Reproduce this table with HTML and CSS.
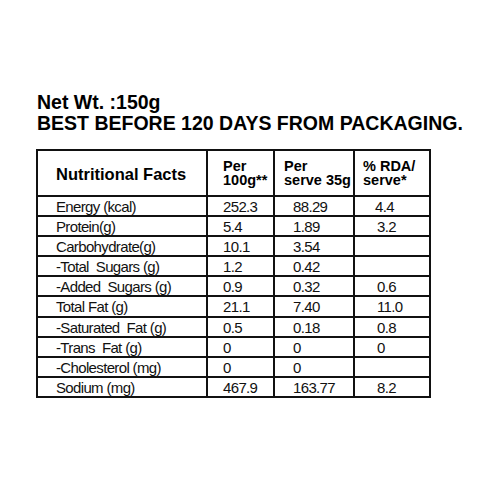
FILE: index.html
```html
<!DOCTYPE html>
<html>
    <head>
        <title>Nutrition Label</title>
        <link rel="stylesheet" href="styles.css">
    </head>

    <body>
        <div class="label">
            <div class="info">
                <p>Net Wt. :150g</p>
                <p>BEST BEFORE 120 DAYS FROM PACKAGING.</p>
            </div><!--info-->

            <table class="facts">
                <colgroup>
                    <col class="w1">
                    <col class="w2">
                    <col class="w3">
                    <col class="w4">
                </colgroup>
                <thead>
                    <tr>
                        <th class="name">Nutritional Facts</th>
                        <th class="c2">Per<br>100g**</th>
                        <th class="c3">Per<br>serve 35g</th>
                        <th class="c4">% RDA/<br>serve*</th>
                    </tr>
                </thead>
                <tbody>
                    <tr><td>Energy (kcal)</td><td class="c2">252.3</td><td class="c3">88.29</td><td class="c4 rda">4.4</td></tr>
                    <tr><td>Protein(g)</td><td class="c2">5.4</td><td class="c3">1.89</td><td class="c4">3.2</td></tr>
                    <tr><td>Carbohydrate(g)</td><td class="c2">10.1</td><td class="c3">3.54</td><td class="c4"></td></tr>
                    <tr><td>-Total&nbsp; Sugars (g)</td><td class="c2">1.2</td><td class="c3">0.42</td><td class="c4"></td></tr>
                    <tr><td>-Added&nbsp; Sugars (g)</td><td class="c2">0.9</td><td class="c3">0.32</td><td class="c4">0.6</td></tr>
                    <tr><td>Total Fat (g)</td><td class="c2">21.1</td><td class="c3">7.40</td><td class="c4">11.0</td></tr>
                    <tr><td>-Saturated&nbsp; Fat (g)</td><td class="c2">0.5</td><td class="c3">0.18</td><td class="c4">0.8</td></tr>
                    <tr><td>-Trans&nbsp; Fat (g)</td><td class="c2">0</td><td class="c3">0</td><td class="c4">0</td></tr>
                    <tr><td>-Cholesterol (mg)</td><td class="c2">0</td><td class="c3">0</td><td class="c4"></td></tr>
                    <tr><td>Sodium (mg)</td><td class="c2">467.9</td><td class="c3">163.77</td><td class="c4">8.2</td></tr>
                </tbody>
            </table>
        </div><!--label-->
    </body>
</html>
```

FILE: styles.css
```css
*{margin:0;padding:0;}

body{
    background: #fff;
    font-family: "Liberation Sans", Arial, sans-serif;
    color: #111;
}

.label{
    padding: 92px 0 0 37px;
}

.info p{
    font-size: 19.5px;
    line-height: 21px;
    font-weight: bold;
    color: #000;
}

/* 표 - 선은 2px 진하게 */
.facts{
    margin-top: 15px;
    margin-left: -1px;
    border-collapse: collapse;
    border: 2px solid #111;
    table-layout: fixed;
    width: 393px;
}

.w1{ width: 170px; }
.w2{ width: 67px; }
.w3{ width: 80px; }
.w4{ width: 76px; }

.facts th,
.facts td{
    border: 2px solid #111;
    text-align: left;
    white-space: nowrap;
}

.facts th{
    height: 41px;
    padding: 0;
    font-size: 14.5px;
    line-height: 14.5px;
    font-weight: bold;
    vertical-align: middle;
    color: #000;
}

.facts th.name{
    font-size: 16.5px;
    line-height: 17px;
    padding: 3px 0 0 18px;
}

/* 데이터 칸 - 글자 살짝 좁게 */
.facts td{
    padding: 1px 0 0 18px;
    font-size: 15px;
    line-height: 17.1px;
    letter-spacing: -0.65px;
    vertical-align: top;
}

.facts .c2{ padding-left: 15px; }
.facts th.c3{ padding-left: 9px; }
.facts .c4{ padding-left: 22px; }
.facts th.c4{ padding-left: 8px; }
.facts td.rda{ padding-left: 20px; }
```
